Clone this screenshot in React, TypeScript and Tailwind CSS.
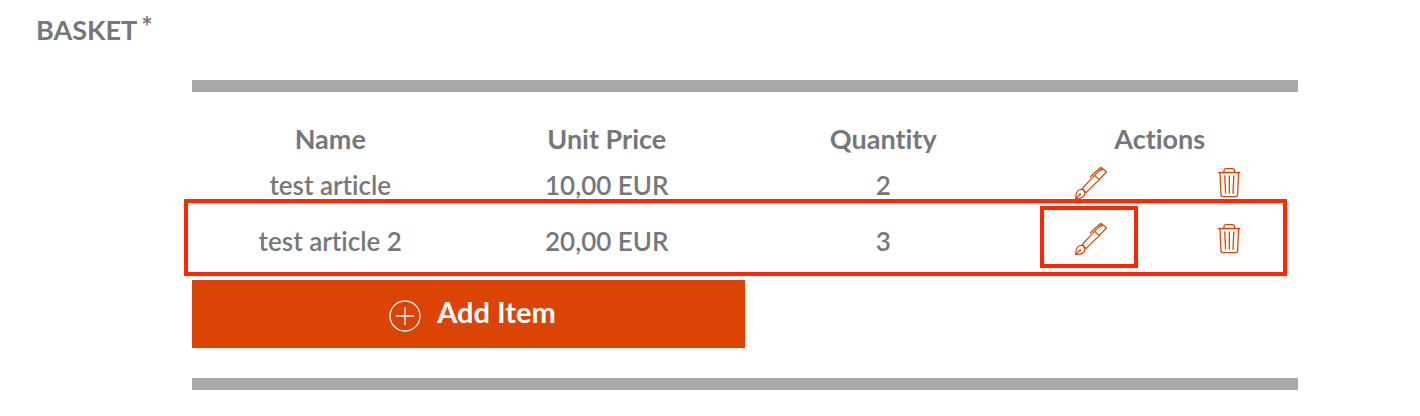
import React from 'react';

const items = [
  { name: 'test article', price: '10,00 EUR', quantity: 2, highlighted: false },
  { name: 'test article 2', price: '20,00 EUR', quantity: 3, highlighted: true },
];

const PenIcon: React.FC = () => (
  <svg
    viewBox="0 0 32 32"
    className="w-8 h-8"
    fill="none"
    stroke="currentColor"
    strokeWidth="1.2"
    strokeLinejoin="round"
    strokeLinecap="round"
    aria-hidden="true"
  >
    <path d="M7.3 21.3 19.6 8.4 27 1.2 31.4 5 24.2 12.6 11 25.6Z" />
    <path d="M27 1.2 25.2.7 15.4 9.8" />
    <path d="M19.6 8.4 24.2 12.6" />
    <path d="M25.6 3.6 27.4 1.8" />
    <path d="M7.2 22.4C4 22.2 1.6 24.4 1.2 27.2L.6 31.4 5 31.1C8.4 30.8 10.2 28.4 9.6 25.2 9.4 23.6 8.6 22.6 7.2 22.4Z" />
    <path d="M.8 31.2 4.8 27.6" />
    <circle cx="5" cy="27.4" r=".5" />
  </svg>
);

const TrashIcon: React.FC = () => (
  <svg
    viewBox="0 0 24 32"
    className="w-6 h-8"
    fill="none"
    stroke="currentColor"
    strokeWidth="1.3"
    strokeLinejoin="round"
    strokeLinecap="round"
    aria-hidden="true"
  >
    <path d="M1.6 5.5H22.8" />
    <path d="M7 5.3V3.6C7 2.4 7.8 1.7 9 1.7H15.4C16.6 1.7 17.4 2.4 17.4 3.6V5.3" />
    <path d="M3 5.7 4 28C4.1 29.2 4.6 29.7 5.8 29.7H18.8C20 29.7 20.5 29.2 20.6 28L21.6 5.7" />
    <path d="M7.8 9 8.6 26.2M12.3 9V26.2M16.8 9 16 26.2" />
  </svg>
);

const PlusCircleIcon: React.FC = () => (
  <svg
    viewBox="0 0 32 32"
    className="w-8 h-8"
    fill="none"
    stroke="currentColor"
    strokeWidth="1.3"
    aria-hidden="true"
  >
    <circle cx="16" cy="16" r="15" />
    <path d="M7 16H25M16 7V25" />
  </svg>
);

const App: React.FC = () => {
  return (
    <main className="bg-white pt-[14px] pb-6 font-['Lato','Open_Sans',sans-serif] text-[27px] leading-8 text-[#75787b] [font-variant-ligatures:none]">
      <h1 className="pl-9 font-bold">
        BASKET
        <span className="relative -top-1 ml-1">*</span>
      </h1>

      <section className="ml-48 mr-[122px] mt-[34px] border-y-12 border-[#a7a8aa] pt-[31px] pb-[30px]">
        <table className="w-full table-fixed text-center">
          <colgroup>
            <col className="w-1/4" />
            <col className="w-1/4" />
            <col className="w-1/4" />
            <col className="w-1/8" />
            <col className="w-1/8" />
          </colgroup>
          <thead>
            <tr>
              <th scope="col">Name</th>
              <th scope="col">Unit Price</th>
              <th scope="col">Quantity</th>
              <th scope="col" colSpan={2}>Actions</th>
            </tr>
          </thead>
          <tbody className="text-[26px] font-semibold">
            {items.map((item) => (
              <tr key={item.name} className="relative h-14">
                <td className="pt-1">
                  {item.name}
                  {item.highlighted && (
                    <span className="pointer-events-none absolute -left-2 right-[11px] -top-3 -bottom-[9px] border-4 border-[#ff2600]" />
                  )}
                </td>
                <td className="pt-1">{item.price}</td>
                <td className="pt-1">{item.quantity}</td>
                <td className="relative">
                  <button
                    type="button"
                    aria-label={`Edit ${item.name}`}
                    className="block mx-auto text-[#dc4405] cursor-pointer"
                  >
                    <PenIcon />
                  </button>
                  {item.highlighted && (
                    <span className="pointer-events-none absolute left-[18px] right-[22px] -top-[5px] -bottom-px border-4 border-[#ff2600]" />
                  )}
                </td>
                <td>
                  <button
                    type="button"
                    aria-label={`Delete ${item.name}`}
                    className="block mx-auto text-[#dc4405] cursor-pointer"
                  >
                    <TrashIcon />
                  </button>
                </td>
              </tr>
            ))}
          </tbody>
        </table>

        <button
          type="button"
          className="mt-[13px] flex h-17 w-1/2 items-center justify-center gap-4 bg-[#dc4405] pl-2 text-[29px] font-bold text-white cursor-pointer"
        >
          <span className="pt-1">
            <PlusCircleIcon />
          </span>
          <span className="pb-1">Add Item</span>
        </button>
      </section>
    </main>
  );
};

export default App;
